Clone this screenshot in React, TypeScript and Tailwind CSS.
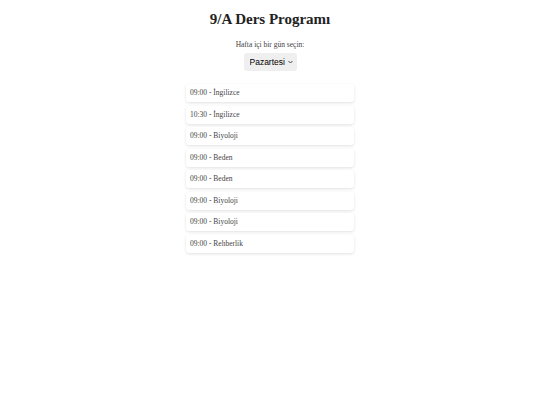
import { useState } from "react"

const dersler = [
  "09:00 - İngilizce",
  "10:30 - İngilizce",
  "09:00 - Biyoloji",
  "09:00 - Beden",
  "09:00 - Beden",
  "09:00 - Biyoloji",
  "09:00 - Biyoloji",
  "09:00 - Rehberlik",
]

export default function App() {
  const [gun, setGun] = useState("Pazartesi")

  return (
    <div className="min-h-screen bg-white text-center font-['Liberation_Serif',serif] text-[#333] pt-[8px]">
      <h1 className="text-[15px] font-bold leading-[22px] text-[#222]">9/A Ders Programı</h1>

      <div className="mt-[10px] text-[7.5px] leading-[10px] text-[#444]">Hafta içi bir gün seçin:</div>
      <div className="relative mx-auto mt-[3px] w-[53px]">
        <select
          value={gun}
          onChange={(e) => setGun(e.target.value)}
          className="block h-[18px] w-[53px] appearance-none rounded-[3px] bg-[#efefef] pl-[6px] text-left text-[8.5px] font-['Liberation_Sans',sans-serif] text-black outline-none"
        >
          <option>Pazartesi</option>
          <option>Salı</option>
          <option>Çarşamba</option>
          <option>Perşembe</option>
          <option>Cuma</option>
        </select>
        <svg
          className="pointer-events-none absolute right-[4px] top-[7px]"
          width="5"
          height="4"
          viewBox="0 0 10 6"
          fill="none"
          stroke="#333"
          strokeWidth="1.8"
        >
          <path d="M1 1l4 4 4-4" />
        </svg>
      </div>

      <ul className="mx-auto mt-[13px] flex w-[168px] flex-col gap-[3.5px] text-left">
        {dersler.map((d, i) => (
          <li
            key={i}
            className="h-[18px] rounded-[3px] bg-white px-[4px] text-[7.5px] leading-[18px] text-[#444] shadow-[0_1px_3px_rgba(0,0,0,0.12)]"
          >
            {d}
          </li>
        ))}
      </ul>
    </div>
  )
}
